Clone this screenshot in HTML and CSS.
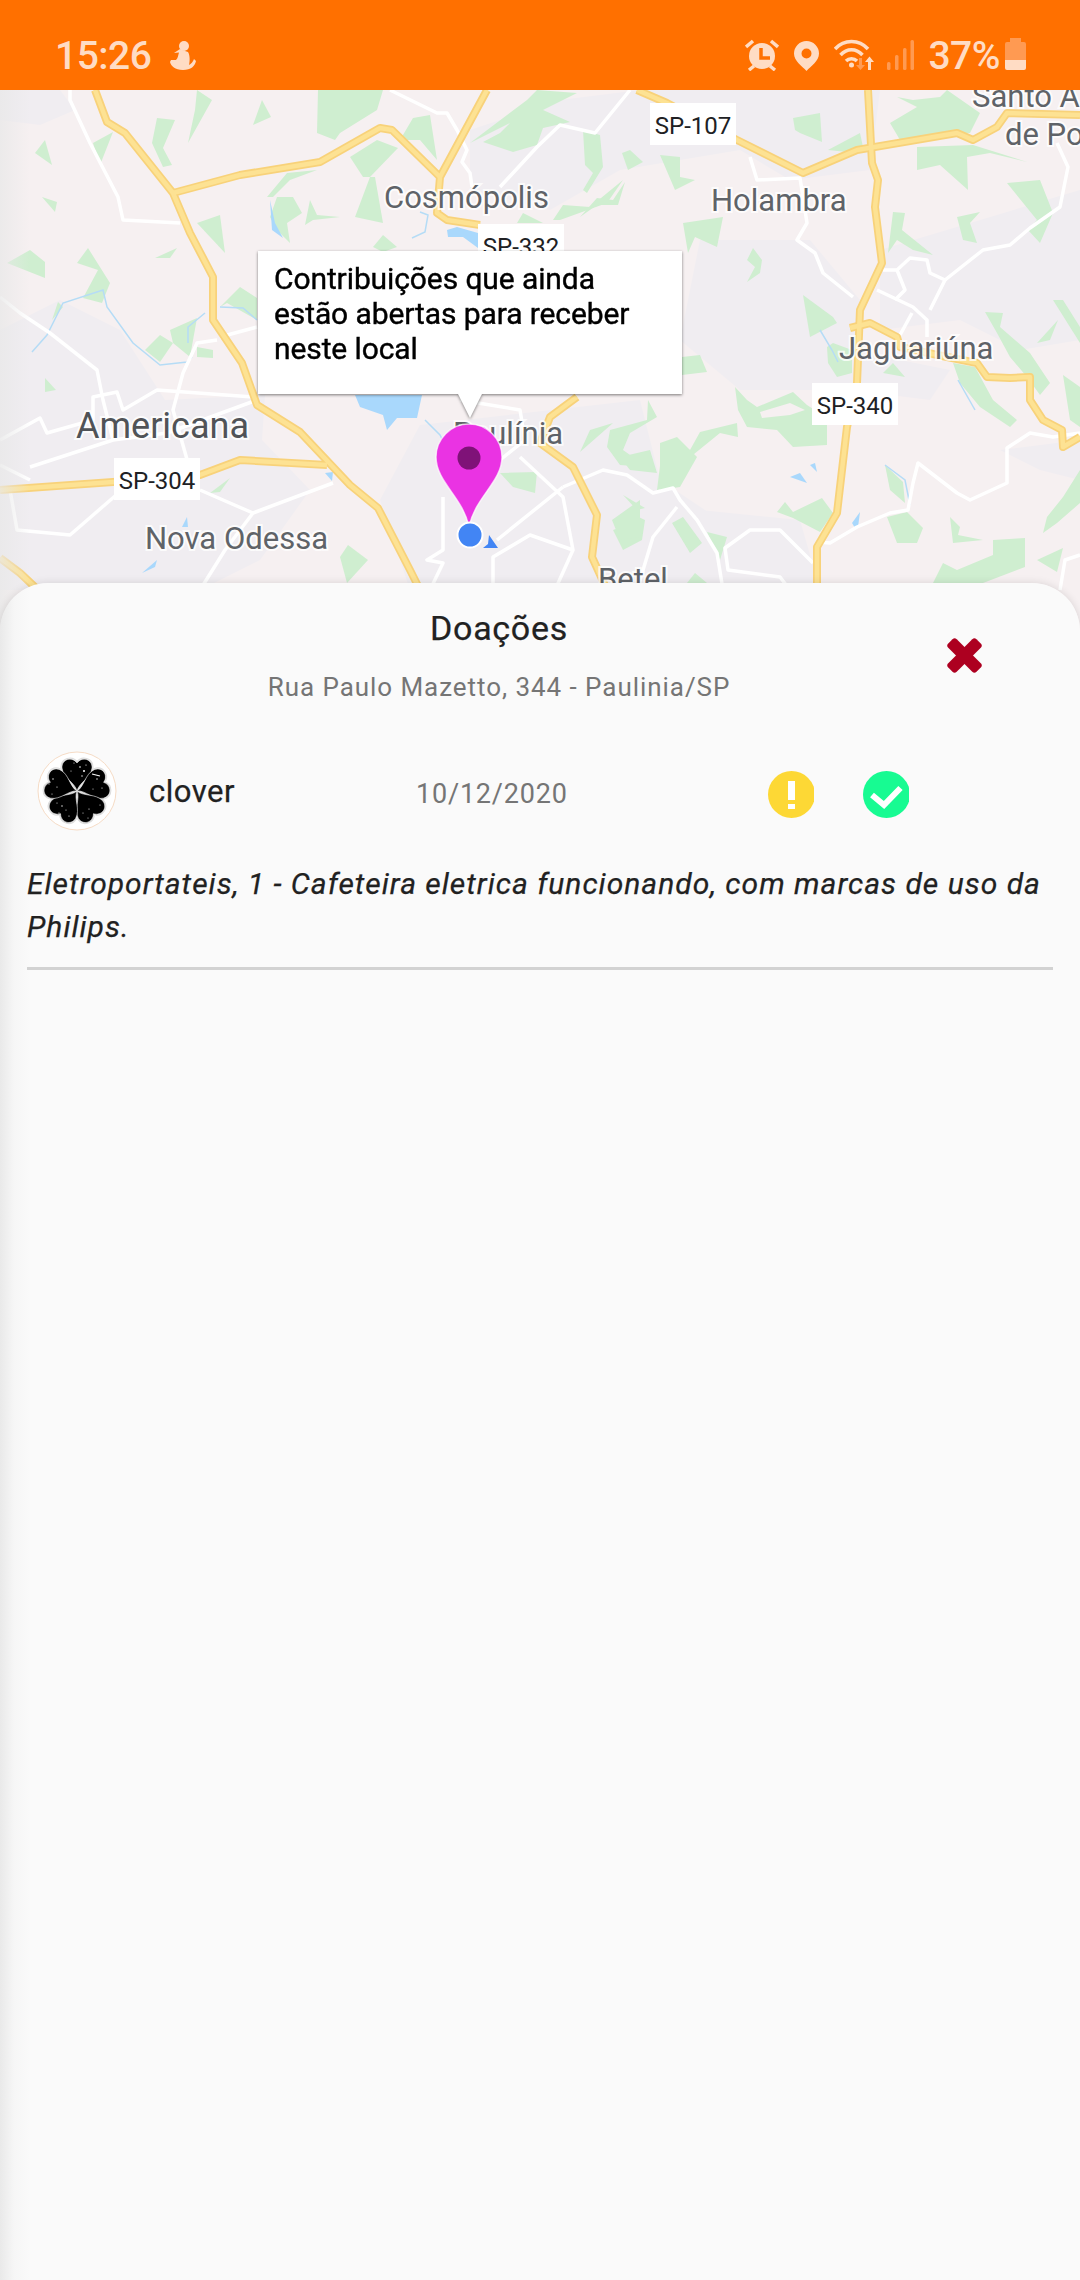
FILE: index.html
```html
<!DOCTYPE html>
<html lang="en">
<head>
    <meta charset="UTF-8">
    <meta name="viewport" content="width=device-width, initial-scale=1.0">
    <title>Doações</title>
    <link rel="stylesheet" href="styles.css">
</head>
<body>
<div class="screen">
    <div class="statusbar">
        <div class="status-left">
            <span class="status-text">15:26</span>
            <svg class="st-figure" viewBox="0 0 26 29">
                <circle cx="14" cy="5" r="5"/>
                <path d="M10 8 L4 12 L9 11.500 C8 15 8 17 6 19 L1 19 L0 21 C1 25 5 29 13 29 C21 29 25 25 26 20 L24 18 C23 21 21 23 19 24 C20 20 20 14 18 11 L15 10 Z"/>
            </svg>
        </div>
        <div class="status-right">
            <svg class="st-alarm" viewBox="0 0 34 32">
                <circle cx="17" cy="17" r="13"/>
                <path class="st-stroke" d="M1 8 L8 2 M33 8 L26 2 M4 31 L9 27 M30 31 L25 27"/>
                <path class="st-cut" d="M16 9 V19 H25"/>
            </svg>
            <svg class="st-pin" viewBox="0 0 25 30">
                <path fill-rule="evenodd" d="M12.500 30 C8 25 0 20 0 12.500 A12.500 12.500 0 0 1 25 12.500 C25 20 17 25 12.500 30 Z M12.500 7.500 A5 5 0 1 0 12.500 17.500 A5 5 0 1 0 12.500 7.500 Z"/>
            </svg>
            <svg class="st-wifi" viewBox="0 0 42 32">
                <path class="st-stroke" d="M1 11 C10 1 25 1 34 11 M6.500 17 C13 10 22 10 28.500 17 M12 23 C15 20 20 20 23 23"/>
                <circle cx="17.500" cy="27" r="2.500"/>
                <path class="st-dim" d="M25 20 H28 V27 H31 L26.500 32 L22 27 H25 Z"/>
                <path d="M37 32 H34 V24 H31 L35.500 18.500 L40 24 H37 Z"/>
            </svg>
            <svg class="st-signal" viewBox="0 0 27 30">
                <rect x="0" y="22" width="3.500" height="8" rx="1.500"/>
                <rect x="8" y="15" width="3.500" height="15" rx="1.500"/>
                <rect x="16" y="8" width="3.500" height="22" rx="1.500"/>
                <rect x="23.500" y="0" width="3.500" height="30" rx="1.500"/>
            </svg>
            <span class="status-text status-pct">37%</span>
            <svg class="st-battery" viewBox="0 0 21 32">
                <path class="st-dim" d="M5 0 H16 V4 H19 Q21 4 21 6 V22 H0 V6 Q0 4 2 4 H5 Z"/>
                <path d="M0 22 H21 V30 Q21 32 19 32 H2 Q0 32 0 30 Z"/>
            </svg>
        </div>
    </div>

    <div class="map">
        <svg class="map-canvas" viewBox="0 90 1080 540">
            <rect class="m-land" x="0" y="90" width="1080" height="540"/>

            <g class="m-soft">
            <g class="m-urban">
                <polygon points="0,90 60,90 75,110 40,125 0,120"/>
                <polygon points="0,330 60,300 120,330 165,400 265,395 262,440 310,490 260,560 200,590 0,590"/>
                <polygon points="420,425 640,400 660,480 720,520 730,590 410,590 380,500"/>
                <polygon points="470,130 560,100 640,90 880,90 870,170 790,180 740,150 620,170 550,210 470,190"/>
                <polygon points="700,240 810,240 860,300 850,390 740,390 680,340"/>
                <polygon points="880,250 1080,190 1080,340 1020,350 960,320 880,330"/>
                <polygon points="850,350 950,370 930,400 850,390"/>
                <polygon points="700,510 800,520 820,590 680,590"/>
                <polygon points="1000,450 1080,440 1080,480 1040,470"/>
            </g>

            <g class="m-green">
                <polygon points="318,90 383,90 377,110 340,133 335,140 317,133"/>
                <polygon points="197,90 212,100 188,143 195,110"/>
                <polygon points="253,125 262,100 271,117"/>
                <polygon points="157,118 175,120 163,148 172,165 163,167 152,143"/>
                <polygon points="45,140 52,165 35,153"/>
                <polygon points="93,143 113,132 100,165"/>
                <polygon points="42,197 57,202 55,212"/>
                <polygon points="197,223 220,215 225,253"/>
                <polygon points="155,258 177,248 170,258"/>
                <polygon points="7,263 30,250 45,262 45,278"/>
                <polygon points="77,263 88,248 110,283 102,303 83,298 98,270"/>
                <polygon points="52,320 58,302 63,307"/>
                <polygon points="45,378 56,390 45,392"/>
                <polygon points="220,307 240,287 257,298 257,320 227,303"/>
                <polygon points="170,330 197,318 190,357 173,343"/>
                <polygon points="145,350 160,335 173,343 160,362"/>
                <polygon points="197,347 213,350 213,358 197,357"/>
                <polygon points="340,557 348,545 368,560 347,583"/>
                <polygon points="210,493 230,478 220,492"/>
                <polygon points="350,157 377,140 398,148 370,177 363,177"/>
                <polygon points="355,217 370,177 375,177 383,223"/>
                <polygon points="267,197 287,173 317,170 290,180 273,197"/>
                <polygon points="277,197 293,197 302,213 287,223 290,243 277,230 270,217"/>
                <polygon points="310,200 317,215 340,217 313,220 305,225"/>
                <polygon points="400,140 413,118 430,115 437,160 420,140 412,140"/>
                <polygon points="373,247 383,235 397,247 383,252"/>
                <polygon points="470,143 527,100 537,90 577,93 543,110 570,122 543,128 537,145 513,152 483,142 500,133 510,123"/>
                <polygon points="583,130 600,135 603,167 587,193 583,190 593,173 585,165"/>
                <polygon points="553,220 563,205 590,207 623,180 607,203 560,220"/>
                <polygon points="517,223 523,213 543,223"/>
                <polygon points="793,118 820,113 822,142 800,133 795,130"/>
                <polygon points="622,153 630,150 643,162 628,170"/>
                <polygon points="660,155 680,157 680,177 695,180 675,190"/>
                <polygon points="580,217 597,198 613,200 625,182 618,205 597,205"/>
                <polygon points="683,223 723,217 717,247 695,237 688,253"/>
                <polygon points="747,260 753,248 762,260 760,273 747,282 755,267"/>
                <polygon points="828,150 860,133 863,147 847,152"/>
                <polygon points="890,123 917,107 897,97 913,100 940,97 947,90 980,113 970,133 920,137 900,140"/>
                <polygon points="917,147 973,145 1027,162 990,153 967,157 968,190 940,165 917,170"/>
                <polygon points="1007,183 1040,180 1053,213 1040,243 1028,230 1037,220"/>
                <polygon points="957,217 980,212 970,223 977,243 963,240"/>
                <polygon points="893,212 905,213 902,230 933,255 913,250 897,240 888,253"/>
                <polygon points="803,295 833,317 837,323 810,337"/>
                <polygon points="827,347 833,343 852,350 852,373 837,377 828,363"/>
                <polygon points="883,373 893,363 905,377"/>
                <polygon points="953,363 975,367 993,400 1017,420 1010,427 980,407 960,383"/>
                <polygon points="985,312 1003,313 1000,327 1030,353 1050,383 1040,395 1027,377 1010,357 997,333"/>
                <polygon points="1037,343 1058,320 1050,340"/>
                <polygon points="1053,300 1063,300 1080,327 1080,343"/>
                <polygon points="1063,375 1080,387 1080,427 1070,420"/>
                <polygon points="682,357 700,355 707,372 682,375"/>
                <polygon points="607,447 610,430 647,420 648,400 657,417 630,433 623,450 647,467 620,465"/>
                <polygon points="657,490 663,442 690,450 700,432 737,423 738,437 720,433 683,463 673,487"/>
                <polygon points="580,452 590,430 613,423"/>
                <polygon points="735,387 747,400 757,407 793,392 807,405 827,418 827,445 793,447 777,430 747,427 738,410"/>
                <polygon points="777,512 785,502 793,512 822,498 833,513 820,532 793,518"/>
                <polygon points="885,465 903,482 905,503 890,490"/>
                <polygon points="887,517 907,512 923,528 917,543 897,543"/>
                <polygon points="950,517 960,527 958,535 983,540 953,543"/>
                <polygon points="993,540 1025,538 1025,567 983,583 933,583 943,563 957,570 993,555"/>
                <polygon points="1037,560 1063,548 1057,572"/>
                <polygon points="1043,533 1047,517 1063,497 1080,470 1080,503 1057,523"/>
                <polygon points="613,530 633,523 630,513 645,520 642,540 623,550"/>
                <polygon points="623,495 645,508 637,510"/>
                <polygon points="672,523 683,517 702,543 690,553"/>
                <polygon points="707,532 727,537 720,560"/>
                <polygon points="687,583 695,573 707,583"/>
                <polygon points="500,473 537,472 535,493 513,487"/>
                <polygon points="612,520 640,500 640,537 620,540"/>
                <polygon points="620,457 650,450 657,473 630,470"/>
                <polygon points="660,443 677,437 697,457 680,487 660,490"/>
            </g>
            <polygon class="m-land" points="760,412 790,403 805,410 790,415 762,418"/>

            <g class="m-water">
                <polygon points="355,395 422,395 417,418 397,418 387,430 383,415 360,407"/>
                <polygon points="447,230 457,227 478,233 478,248 463,237 448,237"/>
                <polygon points="270,200 275,223 283,238 272,230"/>
                <polygon points="790,477 800,473 807,483"/>
                <polygon points="810,465 815,463 817,472"/>
                <polygon points="852,523 860,512 858,527 855,528"/>
                <polygon points="325,473 333,472 332,481"/>
                <polygon points="182,527 187,517 188,527"/>
                <polygon points="142,573 157,560 155,567"/>
            </g>
            <g class="m-river">
                <polyline points="32,352 47,335 63,303 103,290 107,307 133,343 160,365 187,362 192,357"/>
                <polyline points="188,343 188,327 205,313"/>
                <polyline points="220,307 243,308 257,320"/>
                <polyline points="412,238 425,232 428,215 420,212"/>
                <polyline points="425,420 440,435 445,445"/>
                <polyline points="820,330 832,350 838,362"/>
                <polyline points="958,380 975,410"/>
                <polyline points="885,465 905,480 910,505"/>
            </g>

            <g class="m-road">
                <polyline points="70,90 70,100 90,143 118,197 123,220 180,223"/>
                <polyline points="0,297 20,313 50,333 97,370 103,400 113,440"/>
                <polyline points="0,440 40,418 47,433 93,420 93,397 117,392 123,410 157,390 253,397"/>
                <polyline points="30,467 113,440 167,433 257,400"/>
                <polyline points="0,465 30,480"/>
                <polyline points="217,340 197,343 183,373 173,410 190,470"/>
                <polyline points="257,327 220,337"/>
                <polyline points="10,490 17,530 70,535 122,490"/>
                <polyline points="200,490 253,513 333,483"/>
                <polyline points="253,513 225,550 200,590"/>
                <polyline points="390,90 437,113 447,113 457,130 467,150 462,162 470,173 472,187"/>
                <polyline points="630,90 595,133 560,125 537,147 500,187"/>
                <polyline points="750,157 757,180 800,178 807,223 797,240 815,253 823,273 853,297"/>
                <polyline points="877,290 913,307 927,320 927,337"/>
                <polyline points="883,270 897,270 910,258 927,260 930,273 945,280 930,310"/>
                <polyline points="945,280 983,250 1010,245 1030,228 1060,207 1068,167 1057,143"/>
                <polyline points="897,270 905,290 895,300"/>
                <polyline points="912,313 900,335"/>
                <polyline points="1080,433 1053,437 1030,433 1007,448 1007,483 970,500 957,493 918,463 913,483 908,510 890,513 857,527 830,543 818,542"/>
                <polyline points="813,563 780,530 750,530 725,548 728,570 780,577 790,590"/>
                <polyline points="563,487 603,470 627,475 653,493 673,488 680,500 697,520 717,553 723,590"/>
                <polyline points="677,507 653,537 637,590"/>
                <polyline points="520,457 563,497 573,550 555,590"/>
                <polyline points="443,497 443,550 427,560 443,563 430,590"/>
                <polyline points="497,540 563,487"/>
                <polyline points="493,590 493,557 530,535 573,550"/>
                <polyline points="1080,555 1065,560 1060,590"/>
                <polyline points="460,400 520,410 525,440 500,460"/>
            </g>

            <g class="m-highway-edge">
                <polyline points="95,90 107,122 125,133 173,193 190,233 213,277 213,320 242,363 257,405 300,432 350,485 378,508 410,570 420,590"/>
                <polyline points="173,193 240,175 320,162 380,128 392,130 440,177"/>
                <polyline points="487,90 440,177 437,213 447,220 480,225"/>
                <polyline points="0,490 113,482 200,475 240,460 327,465"/>
                <polyline points="0,558 20,573 38,590"/>
                <polyline points="637,90 667,103 737,140 803,173 857,150 957,133 973,140 997,127 1007,113 1080,115"/>
                <polyline points="868,90 872,163 878,180 875,207 882,263 860,310 857,383 847,427 837,513 817,547 817,590"/>
                <polyline points="850,328 870,323 897,337 900,347 947,357 977,363 987,377 1010,378 1030,377 1030,400 1043,420 1062,430 1063,447 1080,437"/>
                <polyline points="577,397 550,417 540,443 573,467 597,515 592,557 607,590"/>
            </g>
            <g class="m-highway">
                <polyline points="95,90 107,122 125,133 173,193 190,233 213,277 213,320 242,363 257,405 300,432 350,485 378,508 410,570 420,590"/>
                <polyline points="173,193 240,175 320,162 380,128 392,130 440,177"/>
                <polyline points="487,90 440,177 437,213 447,220 480,225"/>
                <polyline points="0,490 113,482 200,475 240,460 327,465"/>
                <polyline points="0,558 20,573 38,590"/>
                <polyline points="637,90 667,103 737,140 803,173 857,150 957,133 973,140 997,127 1007,113 1080,115"/>
                <polyline points="868,90 872,163 878,180 875,207 882,263 860,310 857,383 847,427 837,513 817,547 817,590"/>
                <polyline points="850,328 870,323 897,337 900,347 947,357 977,363 987,377 1010,378 1030,377 1030,400 1043,420 1062,430 1063,447 1080,437"/>
                <polyline points="577,397 550,417 540,443 573,467 597,515 592,557 607,590"/>
            </g>
            </g>

            <g class="m-city">
                <text x="76" y="438" class="m-city-big">Americana</text>
                <text x="384" y="208">Cosmópolis</text>
                <text x="711" y="211">Holambra</text>
                <text x="839" y="359">Jaguariúna</text>
                <text x="972" y="107">Santo A</text>
                <text x="1005" y="145">de Po</text>
                <text x="145" y="549">Nova Odessa</text>
                <text x="453" y="444">Paulínia</text>
                <text x="598" y="590">Betel</text>
            </g>

            <g class="m-shield">
                <rect x="650" y="103" width="86" height="42"/>
                <text x="693" y="134">SP-107</text>
                <rect x="478" y="224" width="86" height="42"/>
                <text x="521" y="255">SP-332</text>
                <rect x="812" y="383" width="86" height="42"/>
                <text x="855" y="414">SP-340</text>
                <rect x="114" y="458" width="86" height="42"/>
                <text x="157" y="489">SP-304</text>
            </g>

            <path class="m-pin" d="M469 527 C463 497 436 482 436 457 A33 33 0 0 1 502 457 C502 482 475 497 469 527 Z"/>
            <circle class="m-pin-dot" cx="469" cy="458" r="11.500"/>
            <circle class="m-me" cx="470" cy="535" r="12.500"/>
            <polygon class="m-me-arrow" points="489,535 498,548 483,548 488,544"/>
        </svg>

        <div class="tooltip">Contribuições que ainda estão abertas para receber neste local</div>
    </div>

    <div class="panel">
        <div class="panel-head">
            <div class="head-text">
                <div class="title">Doações</div>
                <div class="address">Rua Paulo Mazetto, 344 - Paulinia/SP</div>
            </div>
            <svg class="close" viewBox="-18.500 -18.500 37 37">
                <rect x="-20" y="-6" width="40" height="12" rx="3" transform="rotate(45)"/>
                <rect x="-20" y="-6" width="40" height="12" rx="3" transform="rotate(-45)"/>
            </svg>
        </div>

        <div class="donation">
            <svg class="avatar" viewBox="-40 -40 80 80">
                <circle class="av-ring" cx="0" cy="0" r="39"/>
                <defs>
                    <path id="leaf" d="M0 0 C-1.500 -8 -14 -13 -15 -23 C-15.500 -32 -5 -35 0 -28 C5 -35 15.500 -32 15 -23 C14 -13 1.500 -8 0 0 Z"/>
                </defs>
                <g class="av-halo">
                    <use href="#leaf"/>
                    <use href="#leaf" transform="rotate(72)"/>
                    <use href="#leaf" transform="rotate(144)"/>
                    <use href="#leaf" transform="rotate(216)"/>
                    <use href="#leaf" transform="rotate(288)"/>
                </g>
                <g class="av-leaf">
                    <use href="#leaf"/>
                    <use href="#leaf" transform="rotate(72)"/>
                    <use href="#leaf" transform="rotate(144)"/>
                    <use href="#leaf" transform="rotate(216)"/>
                    <use href="#leaf" transform="rotate(288)"/>
                </g>
                <g class="av-speck">
                    <circle cx="3" cy="-24" r=".8"/><circle cx="7" cy="-20" r="1"/><circle cx="5" cy="-15" r=".7"/>
                    <circle cx="9" cy="-26" r=".6"/><circle cx="-6" cy="-20" r=".5"/><circle cx="20" cy="-12" r=".7"/>
                    <circle cx="25" cy="-3" r=".6"/><circle cx="16" cy="-2" r=".5"/><circle cx="-24" cy="-12" r=".7"/>
                    <circle cx="-20" cy="-4" r=".6"/><circle cx="-28" cy="-7" r=".5"/><circle cx="-15" cy="15" r=".7"/>
                    <circle cx="-18" cy="22" r=".6"/><circle cx="-8" cy="25" r=".6"/><circle cx="12" cy="18" r=".6"/>
                    <circle cx="18" cy="24" r=".7"/><circle cx="11" cy="27" r=".5"/><circle cx="-11" cy="19" r=".5"/>
                    <circle cx="-3" cy="-28" r=".5"/><circle cx="28" cy="-9" r=".5"/><circle cx="-25" cy="3" r=".5"/>
                    <circle cx="-20" cy="12" r=".5"/><circle cx="23" cy="14" r=".5"/><circle cx="6" cy="22" r=".5"/>
                    <path class="av-nick" d="M15 -17 L23 -15"/>
                </g>
            </svg>
            <span class="name">clover</span>
            <span class="date">10/12/2020</span>
            <svg class="state state-warn" viewBox="0 0 46 47">
                <circle cx="23.500" cy="23.500" r="23.500"/>
                <rect x="20" y="10" width="7" height="19"/>
                <rect x="20" y="33" width="7" height="5"/>
            </svg>
            <svg class="state state-ok" viewBox="0 0 46 47">
                <circle cx="23.500" cy="23.500" r="23.500"/>
                <polyline points="9,24 21,34 37.500,17"/>
            </svg>
        </div>

        <p class="description">Eletroportateis, 1 - Cafeteira eletrica funcionando, com marcas de uso da Philips.</p>
    </div>
</div>
</body>
</html>
```

FILE: styles.css
```css
html, body {
    margin: 0;
    padding: 0;
    background-color: #fafafa;
}
.screen {
    display: flex;
    flex-direction: column;
    width: 1080px;
    height: 2280px;
    overflow: hidden;
    font-family: Roboto, "Liberation Sans", sans-serif;
}

/* status bar */
.statusbar {
    flex: none;
    display: flex;
    justify-content: space-between;
    align-items: flex-start;
    height: 90px;
    box-sizing: border-box;
    padding: 30px 54px 0 55px;
    background-color: #ff7000;
}
.status-left, .status-right {
    display: flex;
    align-items: flex-start;
}
.status-text {
    font-size: 39px;
    font-weight: 500;
    line-height: 50px;
    letter-spacing: -0.5px;
    color: #ffdcc4;
    margin-top: 1px;
}
.statusbar svg {
    display: block;
    fill: #ffdcc4;
}
.st-stroke {
    fill: none;
    stroke: #ffdcc4;
    stroke-width: 3.5;
}
.st-cut {
    fill: none;
    stroke: #ff7000;
    stroke-width: 3.5;
}
.statusbar .st-dim {
    fill: #ff9a52;
}
.st-figure {
    width: 26px;
    height: 29px;
    margin: 11px 0 0 19px;
}
.st-alarm {
    width: 34px;
    height: 32px;
    margin-top: 9px;
}
.st-pin {
    width: 25px;
    height: 30px;
    margin: 11px 0 0 15px;
}
.st-wifi {
    width: 42px;
    height: 32px;
    margin: 8px 0 0 15px;
}
.statusbar .st-signal {
    width: 27px;
    height: 30px;
    margin: 10px 0 0 11px;
    fill: #ff9a52;
}
.status-pct {
    margin-left: 14px;
}
.st-battery {
    width: 21px;
    height: 32px;
    margin: 8px 0 0 5px;
}

/* map */
.map {
    flex: none;
    position: relative;
    height: 540px;
    overflow: hidden;
}
.map::after {
    content: "";
    position: absolute;
    left: 0;
    top: 0;
    bottom: 0;
    width: 30px;
    background: linear-gradient(to right, rgba(232, 232, 232, 0.75), rgba(232, 232, 232, 0));
}
.map-canvas {
    display: block;
    width: 1080px;
    height: 540px;
}
.m-soft {
    filter: blur(0.7px);
}
.m-land {
    fill: #f6f0f1;
}
.m-urban {
    fill: #f0edf1;
}
.m-green {
    fill: #cfeed0;
}
.m-water {
    fill: #a9d8fc;
}
.m-river {
    fill: none;
    stroke: #b5dcf6;
    stroke-width: 1.5;
}
.m-road {
    fill: none;
    stroke: #ffffff;
    stroke-width: 3.5;
    stroke-linejoin: round;
}
.m-highway-edge {
    fill: none;
    stroke: #f8d27a;
    stroke-width: 8;
    stroke-linejoin: round;
}
.m-highway {
    fill: none;
    stroke: #fde293;
    stroke-width: 4.5;
    stroke-linejoin: round;
}
.m-city {
    font-size: 31px;
    fill: #5f6368;
    stroke: rgba(255, 255, 255, 0.8);
    stroke-width: 4px;
    paint-order: stroke;
}
.m-city-big {
    font-size: 36px;
    fill: #505357;
}
.m-shield rect {
    fill: #ffffff;
}
.m-shield text {
    font-size: 24px;
    fill: #202124;
    text-anchor: middle;
}
.m-pin {
    fill: #ea33e3;
    stroke: rgba(255, 255, 255, 0.7);
    stroke-width: 1.5;
}
.m-pin-dot {
    fill: #7f1278;
}
.m-me {
    fill: #4285f4;
    stroke: #ffffff;
    stroke-width: 2;
}
.m-me-arrow {
    fill: #4285f4;
}

/* info window over the pin */
.tooltip {
    position: absolute;
    left: 258px;
    top: 161px;
    width: 424px;
    height: 143px;
    box-sizing: border-box;
    padding: 10px 16px 0;
    background-color: #ffffff;
    color: #000000;
    font-size: 30px;
    line-height: 35px;
    letter-spacing: -0.1px;
    -webkit-text-stroke: 0.4px #000000;
    filter: drop-shadow(0 1px 1.5px rgba(0, 0, 0, 0.5));
}
.tooltip::after {
    content: "";
    position: absolute;
    left: 200px;
    top: 143px;
    width: 24px;
    height: 24px;
    background-color: #ffffff;
    clip-path: polygon(0 0, 100% 0, 50% 100%);
}

/* bottom sheet */
.panel {
    flex: 1;
    position: relative;
    margin-top: -47px;
    border-radius: 48px 48px 0 0;
    background: linear-gradient(to right, #e9e9e9, #f6f6f6 14px, #fafafa 30px);
    box-shadow: 0 0 8px rgba(0, 0, 0, 0.12);
}
.panel-head {
    display: flex;
    align-items: flex-start;
    padding: 23px 0 0 120px;
}
.head-text {
    width: 758px;
    text-align: center;
}
.title {
    font-size: 34px;
    line-height: 44px;
    letter-spacing: 0.7px;
    -webkit-text-stroke: 0.25px #212121;
    color: #212121;
}
.address {
    margin-top: 21px;
    font-size: 26px;
    line-height: 32px;
    letter-spacing: 0.95px;
    color: #757575;
}
.close {
    display: block;
    width: 37px;
    height: 37px;
    margin: 31px 0 0 68px;
    fill: #ad0020;
}
.donation {
    display: flex;
    align-items: center;
    padding: 48px 0 0 38px;
}
.avatar {
    flex: none;
    width: 80px;
    height: 80px;
    margin-left: -1px;
}
.av-ring {
    fill: #ffffff;
    stroke: #f6dcc6;
    stroke-width: 1;
}
.av-halo {
    fill: #dddddd;
    stroke: #dddddd;
    stroke-width: 3;
}
.av-leaf {
    fill: #000000;
    stroke: #ffffff;
    stroke-width: 0.5;
}
.av-speck {
    fill: #ffffff;
}
.av-nick {
    stroke: #ffffff;
    stroke-width: 1.2;
}
.name {
    width: 267px;
    margin-left: 32px;
    font-size: 31px;
    letter-spacing: 0.5px;
    -webkit-text-stroke: 0.25px #212121;
    color: #212121;
}
.date {
    width: 352px;
    margin-top: 5px;
    font-size: 27px;
    letter-spacing: 0.8px;
    color: #757575;
}
.state {
    flex: none;
    display: block;
    width: 46px;
    height: 47px;
    margin-top: 7px;
}
.state-warn {
    fill: #fdd835;
}
.state-warn rect {
    fill: #ffffff;
}
.state-ok {
    margin-left: 49px;
    fill: #17fb92;
}
.state-ok polyline {
    fill: none;
    stroke: #ffffff;
    stroke-width: 6;
}
.description {
    margin: 31px 27px 0;
    padding-bottom: 19px;
    border-bottom: 3px solid #d2d2d2;
    font-size: 30px;
    line-height: 43px;
    font-style: italic;
    letter-spacing: 1px;
    -webkit-text-stroke: 0.25px #212121;
    color: #212121;
}
```
